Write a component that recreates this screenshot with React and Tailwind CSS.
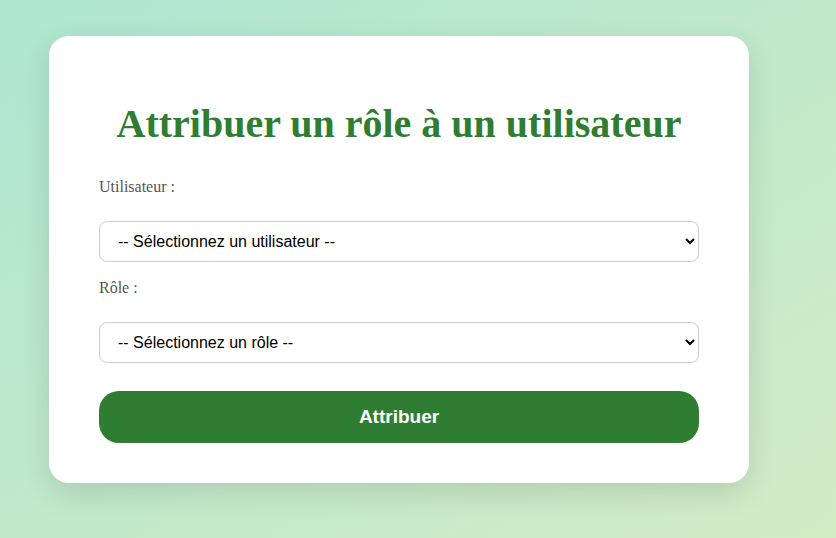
import React from "react";

const App = () => {
  return (
    <div className="min-h-screen w-full bg-gradient-to-br from-[#ade6cf] to-[#d3ecc6] pt-[36px] pl-[49px]">
      <div className="w-[700px] bg-white rounded-[20px] shadow-[0_10px_30px_rgba(0,0,0,0.12)] px-[50px] pt-[65px] pb-[40px]">
        <h2 className="text-center text-[40px] leading-[46px] font-bold text-[#2e7d32] font-['Liberation_Serif',serif]">
          Attribuer un rôle à un utilisateur
        </h2>

        <label className="block mt-[31px] h-[18px] text-[16px] leading-[18px] text-[#555] font-['Liberation_Serif',serif]">
          Utilisateur :
        </label>
        <select className="block w-full mt-[25px] h-[41px] pl-[14px] pr-[8px] border border-[#ccc] rounded-[8px] bg-white text-black text-[16px] font-['Liberation_Sans',Arial,sans-serif]">
          <option>-- Sélectionnez un utilisateur --</option>
        </select>

        <label className="block mt-[17px] h-[18px] text-[16px] leading-[18px] text-[#555] font-['Liberation_Serif',serif]">
          Rôle :
        </label>
        <select className="block w-full mt-[25px] h-[41px] pl-[14px] pr-[8px] border border-[#ccc] rounded-[8px] bg-white text-black text-[16px] font-['Liberation_Sans',Arial,sans-serif]">
          <option>-- Sélectionnez un rôle --</option>
        </select>

        <button className="block w-full mt-[28px] h-[52px] rounded-[20px] bg-[#2e7d32] text-white text-[19px] font-bold font-['Liberation_Sans',Arial,sans-serif]">
          Attribuer
        </button>
      </div>
    </div>
  );
};

export default App;
